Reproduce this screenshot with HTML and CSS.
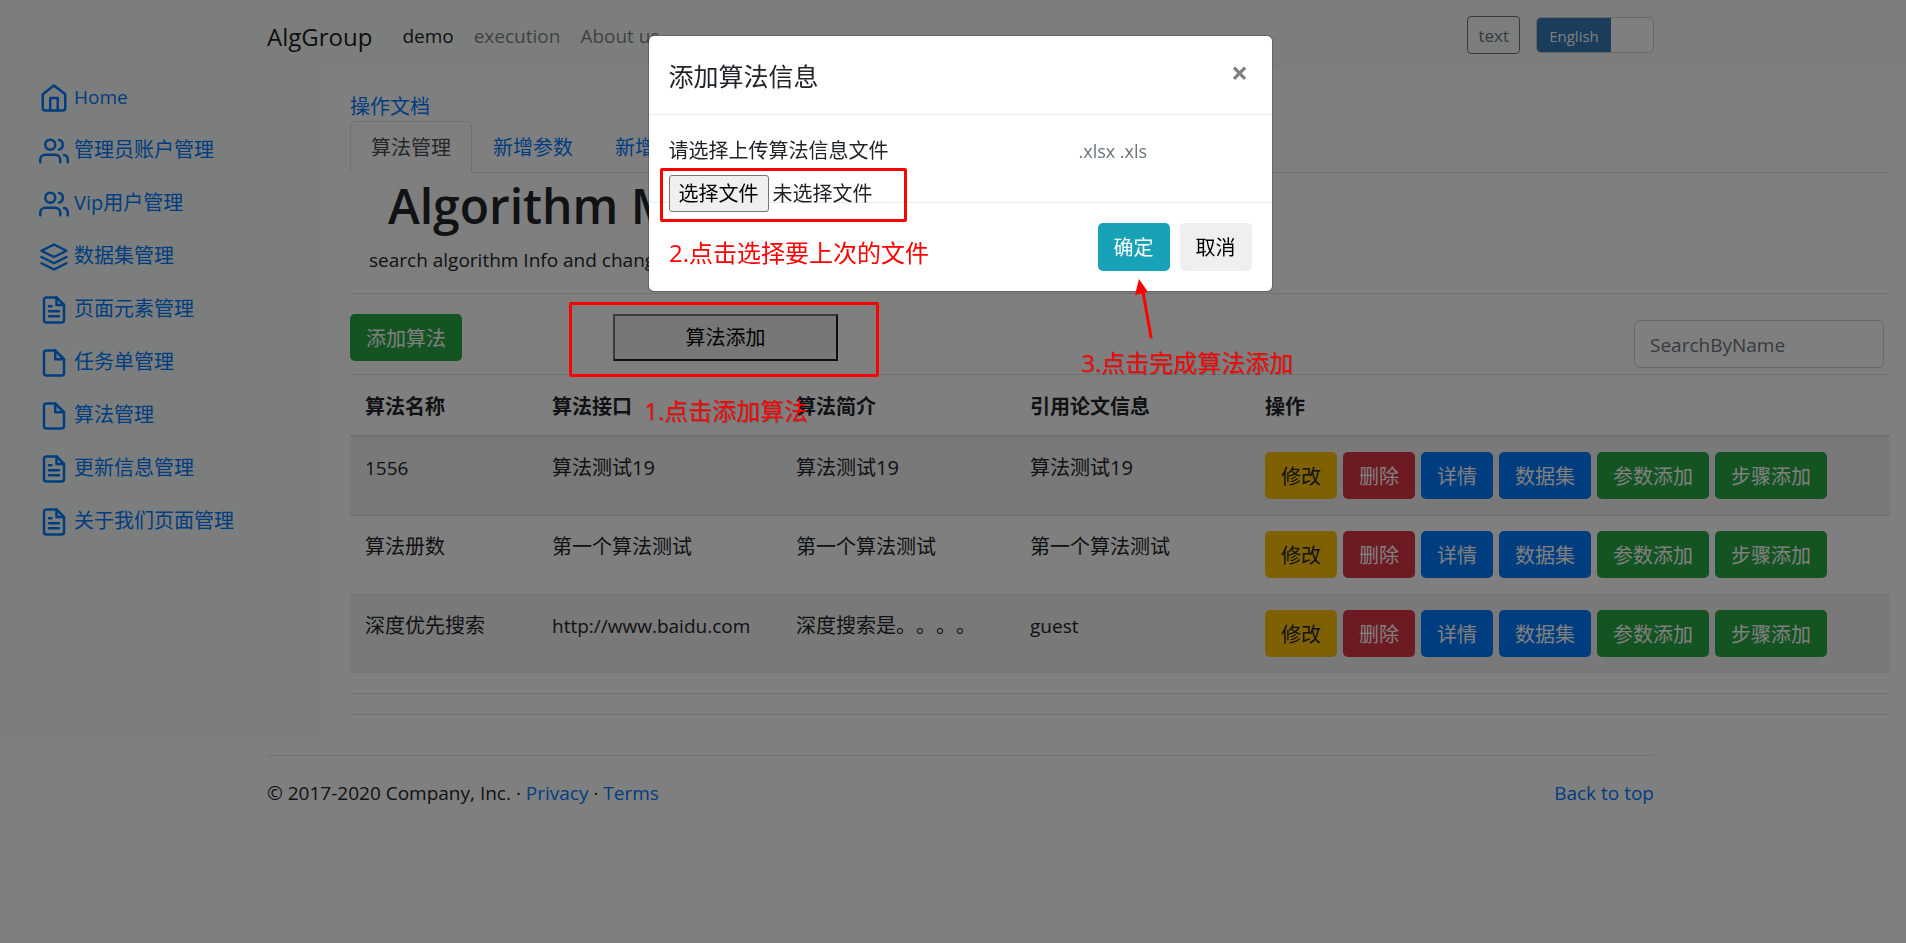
FILE: index.html
```html
<!DOCTYPE html>
<html lang="zh-CN">
<head>
<meta charset="utf-8">
<meta name="viewport" content="width=device-width, initial-scale=1">
<title>AlgGroup</title>
<link rel="stylesheet" href="styles.css">
</head>
<body>
<svg class="sprite" aria-hidden="true">
  <symbol id="i-home" viewBox="0 0 24 24"><path d="M3 9l9-7 9 7v11a2 2 0 0 1-2 2H5a2 2 0 0 1-2-2z"/><path d="M9 22V12h6v10"/></symbol>
  <symbol id="i-users" viewBox="0 0 24 24"><path d="M17 21v-2a4 4 0 0 0-4-4H5a4 4 0 0 0-4 4v2"/><circle cx="9" cy="7" r="4"/><path d="M23 21v-2a4 4 0 0 0-3-3.87"/><path d="M16 3.13a4 4 0 0 1 0 7.75"/></symbol>
  <symbol id="i-layers" viewBox="0 0 24 24"><path d="M12 2L2 7l10 5 10-5-10-5z"/><path d="M2 17l10 5 10-5"/><path d="M2 12l10 5 10-5"/></symbol>
  <symbol id="i-doc" viewBox="0 0 24 24"><path d="M14 2H6a2 2 0 0 0-2 2v16a2 2 0 0 0 2 2h12a2 2 0 0 0 2-2V8z"/><path d="M14 2v6h6M16 13H8M16 17H8M10 9H8"/></symbol>
  <symbol id="i-file" viewBox="0 0 24 24"><path d="M13 2H6a2 2 0 0 0-2 2v16a2 2 0 0 0 2 2h12a2 2 0 0 0 2-2V9z"/><path d="M13 2v7h7"/></symbol>
</svg>

<header class="navbar">
  <div class="container navbar-inner">
    <a class="brand" href="#">AlgGroup</a>
    <nav class="nav-links">
      <a class="active" href="#">demo</a>
      <a href="#">execution</a>
      <a href="#">About us</a>
    </nav>
    <button class="btn-text" type="button">text</button>
    <button class="lang-switch" type="button"><span class="lang-on">English</span></button>
  </div>
</header>

<div class="layout">
  <nav class="sidebar">
    <a class="latin" href="#"><svg class="icon"><use href="#i-home"/></svg>Home</a>
    <a href="#"><svg class="icon"><use href="#i-users"/></svg>管理员账户管理</a>
    <a href="#"><svg class="icon"><use href="#i-users"/></svg>Vip用户管理</a>
    <a href="#"><svg class="icon"><use href="#i-layers"/></svg>数据集管理</a>
    <a href="#"><svg class="icon"><use href="#i-doc"/></svg>页面元素管理</a>
    <a href="#"><svg class="icon"><use href="#i-file"/></svg>任务单管理</a>
    <a href="#"><svg class="icon"><use href="#i-file"/></svg>算法管理</a>
    <a href="#"><svg class="icon"><use href="#i-doc"/></svg>更新信息管理</a>
    <a href="#"><svg class="icon"><use href="#i-doc"/></svg>关于我们页面管理</a>
  </nav>

  <main class="main">
    <a class="doc-link" href="#">操作文档</a>
    <nav class="tabs">
      <a class="active" href="#">算法管理</a>
      <a href="#">新增参数</a>
      <a href="#">新增步骤</a>
    </nav>
    <div class="intro">
      <h1>Algorithm Manage</h1>
      <p class="latin">search algorithm Info and change</p>
    </div>
    <div class="toolbar">
      <button class="btn btn-success" type="button">添加算法</button>
      <button class="btn-add" type="button">算法添加</button>
      <input class="search latin" type="text" placeholder="SearchByName" aria-label="SearchByName">
    </div>
    <table class="table">
      <colgroup><col class="c-name"><col class="c-api"><col class="c-intro"><col class="c-ref"><col></colgroup>
      <thead>
        <tr><th>算法名称</th><th>算法接口</th><th>算法简介</th><th>引用论文信息</th><th>操作</th></tr>
      </thead>
      <tbody>
        <tr>
          <td class="latin">1556</td><td>算法测试19</td><td>算法测试19</td><td>算法测试19</td>
          <td class="ops"><div class="actions">
            <button class="btn btn-warning" type="button">修改</button>
            <button class="btn btn-danger" type="button">删除</button>
            <button class="btn btn-primary" type="button">详情</button>
            <button class="btn btn-primary" type="button">数据集</button>
            <button class="btn btn-success" type="button">参数添加</button>
            <button class="btn btn-success" type="button">步骤添加</button>
          </div></td>
        </tr>
        <tr>
          <td>算法册数</td><td>第一个算法测试</td><td>第一个算法测试</td><td>第一个算法测试</td>
          <td class="ops"><div class="actions">
            <button class="btn btn-warning" type="button">修改</button>
            <button class="btn btn-danger" type="button">删除</button>
            <button class="btn btn-primary" type="button">详情</button>
            <button class="btn btn-primary" type="button">数据集</button>
            <button class="btn btn-success" type="button">参数添加</button>
            <button class="btn btn-success" type="button">步骤添加</button>
          </div></td>
        </tr>
        <tr>
          <td>深度优先搜索</td><td class="latin">http://www.baidu.com</td><td>深度搜索是。。。。</td><td class="latin">guest</td>
          <td class="ops"><div class="actions">
            <button class="btn btn-warning" type="button">修改</button>
            <button class="btn btn-danger" type="button">删除</button>
            <button class="btn btn-primary" type="button">详情</button>
            <button class="btn btn-primary" type="button">数据集</button>
            <button class="btn btn-success" type="button">参数添加</button>
            <button class="btn btn-success" type="button">步骤添加</button>
          </div></td>
        </tr>
      </tbody>
    </table>
    <hr>
    <hr>
  </main>
</div>

<footer class="footer">
  <div class="container">
    <hr>
    <div class="footer-row latin">
      <p>© 2017-2020 Company, Inc. · <a href="#">Privacy</a> · <a href="#">Terms</a></p>
      <a href="#">Back to top</a>
    </div>
  </div>
</footer>

<div class="backdrop"></div>

<div class="modal-layer">
  <section class="modal" role="dialog" aria-modal="true" aria-labelledby="modal-title">
    <header class="modal-header">
      <h2 id="modal-title">添加算法信息</h2>
      <button class="close" type="button" aria-label="Close">×</button>
    </header>
    <div class="modal-body">
      <div class="modal-row">
        <label for="upload">请选择上传算法信息文件</label>
        <span class="hint">.xlsx .xls</span>
      </div>
      <label class="file">
        <input id="upload" type="file" accept=".xlsx,.xls">
        <span class="file-btn">选择文件</span>
        <span>未选择文件</span>
      </label>
    </div>
    <footer class="modal-footer">
      <button class="btn btn-info" type="button">确定</button>
      <button class="btn btn-light" type="button">取消</button>
    </footer>
  </section>
</div>

<div class="frame frame-add"></div>
<div class="frame frame-file"></div>
<p class="note note-1">1.点击添加算法</p>
<p class="note note-2">2.点击选择要上次的文件</p>
<p class="note note-3">3.点击完成算法添加</p>
<svg class="arrow" viewBox="0 0 24 64" aria-hidden="true"><path class="arrow-line" d="M9 13L17 58"/><path class="arrow-head" d="M5 0L14 13L1 16Z"/></svg>
</body>
</html>
```
FILE: styles.css
```css
*, *::before, *::after { box-sizing: border-box; }

body {
  margin: 0;
  background: #fff;
  color: #212529;
  font: 400 20px/30px "Open Sans", "Noto Sans CJK SC", sans-serif;
  text-spacing-trim: space-all;
  overflow-x: hidden;
}

button, input { font: inherit; color: inherit; margin: 0; }
a { color: #007bff; text-decoration: none; }
p, h1, h2 { margin: 0; }
hr { width: 100%; height: 1px; margin: 20px 0; border: 0; background: rgba(0, 0, 0, .1); }

.latin { font-size: 19px; }
.sprite { display: none; }

.container { max-width: 1387px; margin: 0 auto; }

/* Top bar */
.navbar { background: #f7fcfa; padding-left: 15px; }
.navbar-inner { display: flex; align-items: center; height: 70px; }
.brand { color: rgba(0, 0, 0, .9); font-size: 24px; margin-right: 30px; padding-top: 4px; }
.nav-links { display: flex; gap: 20px; font-size: 19px; margin-right: auto; padding-top: 2px; }
.nav-links a { color: rgba(0, 0, 0, .5); }
.nav-links .active { color: rgba(0, 0, 0, .9); }
.btn-text {
  height: 38px; padding: 2px 10px 0; margin-right: 16px;
  border: 1px solid #6c757d; border-radius: 4px; background: none;
  color: #6c757d; font-size: 17px;
}
.lang-switch {
  display: flex; width: 118px; height: 36px; padding: 0;
  border: 1px solid #ccc; border-radius: 5px; background: #fff; overflow: hidden;
}
.lang-on {
  flex: 0 0 74px; height: 34px; line-height: 36px;
  background: #337ab7; color: #fff; font-size: 15px; text-align: center;
}

/* Page columns */
.layout { display: flex; }
.sidebar { flex: 0 0 320px; padding-left: 39px; background: #f7fcfa; }
.sidebar a { display: flex; align-items: center; gap: 5px; height: 53px; }
.icon {
  width: 30px; height: 30px; margin-top: 2px;
  fill: none; stroke: #007bff; stroke-width: 2; stroke-linecap: round; stroke-linejoin: round;
}
.main { flex: 1; min-width: 0; padding: 22px 16px 0 30px; }
.doc-link { display: block; height: 29px; }

.tabs { display: flex; border-bottom: 1px solid #dee2e6; }
.tabs a {
  padding: 11px 20px 9px; margin-bottom: -1px;
  border: 1px solid transparent; border-radius: 5px 5px 0 0; white-space: nowrap;
}
.tabs .active { color: #495057; background: #fff; border-color: #dee2e6 #dee2e6 #fff; }

.intro { padding: 0 19px 18px; border-bottom: 1px solid rgba(0, 0, 0, .1); }
.intro h1 { padding: 2px 19px 8px; font-size: 48px; font-weight: 600; line-height: 62px; }

.toolbar { display: flex; align-items: flex-start; padding: 20px 6px 6px 0; }
.btn {
  height: 47px; padding: 2px 16px 0; border: 0; border-radius: 5px;
  color: #fff; white-space: nowrap;
}
.btn-success { background: #28a745; }
.btn-warning { background: #ffc107; color: #212529; }
.btn-danger { background: #dc3545; }
.btn-primary { background: #007bff; }
.btn-info { background: #17a2b8; }
.btn-light { background: #efefef; color: #000; }
.btn-add {
  width: 225px; height: 47px; margin-left: 151px; padding-top: 2px;
  border: 2px outset #767676; border-radius: 0; background: #efefef; color: #000;
}
.search {
  width: 250px; height: 48px; margin: 6px 0 0 auto; padding: 2px 15px 0;
  border: 1px solid #ced4da; border-radius: 5px; background: #fff;
}
.search::placeholder { color: #6c757d; opacity: 1; }

.table { width: 100%; table-layout: fixed; border-collapse: separate; border-spacing: 0; }
.c-name { width: 187px; }
.c-api { width: 244px; }
.c-intro { width: 234px; }
.c-ref { width: 235px; }
.table th, .table td { padding: 16px 15px; border-top: 1px solid #dee2e6; text-align: left; vertical-align: top; }
.table th { padding: 17px 15px 13px; border-bottom: 2px solid #dee2e6; font-weight: 700; }
.table .ops { padding-top: 15px; }
.table tbody tr:first-child td { border-top: 0; }
.table tbody tr:nth-child(odd) { background: rgba(0, 0, 0, .05); }
.actions { display: flex; gap: 6px; }

.footer { padding-left: 15px; }
.footer-row { display: flex; justify-content: space-between; padding-top: 2px; }

/* Dialog */
.backdrop { position: fixed; inset: 0; background: rgba(0, 0, 0, .5); }
.modal-layer { position: fixed; inset: 0; padding: 35px 0 0 14px; }
.modal {
  max-width: 625px; margin: 0 auto; background: #fff; background-clip: padding-box;
  border: 1px solid rgba(0, 0, 0, .2); border-radius: 6px;
}
.modal-header {
  display: flex; align-items: flex-start; justify-content: space-between;
  padding: 21px 20px 19px; border-bottom: 1px solid #e9ecef;
}
.modal-header h2 { font-size: 25px; font-weight: 400; line-height: 38px; }
.close {
  width: 24px; height: 32px; padding: 0; border: 0; background: none;
  color: #808080; font-size: 30px; font-weight: 700; line-height: 32px;
}
.modal-body { padding: 21px 20px 20px; border-bottom: 1px solid #e9ecef; }
.modal-row { display: grid; grid-template-columns: 410px 1fr; }
.hint { color: #6c757d; font-size: 18px; }
.file { display: flex; align-items: center; gap: 4px; width: max-content; margin: 9px 0 -30px; }
.file input { position: absolute; width: 1px; height: 1px; opacity: 0; }
.file-btn {
  height: 37px; padding: 0 9px; line-height: 36px;
  border: 1px solid #767676; border-radius: 3px; background: #efefef; color: #000;
}
.modal-footer { display: flex; justify-content: flex-end; gap: 10px; padding: 20px; }
.modal-footer .btn { height: 48px; }

/* Step marks over the page */
.frame { position: absolute; border: 3px solid #f00; border-radius: 2px; }
.frame-add { left: 569px; top: 302px; width: 310px; height: 75px; }
.frame-file { left: 660px; top: 168px; width: 247px; height: 54px; }
.note { position: absolute; color: #f00; font-size: 24px; white-space: nowrap; text-shadow: 1px 1px 1px rgba(0, 0, 0, .2); }
.note-1 { left: 644px; top: 396px; }
.note-2 { left: 669px; top: 238px; text-shadow: none; }
.note-3 { left: 1081px; top: 348px; }
.arrow { position: absolute; left: 1134px; top: 279px; width: 24px; height: 64px; }
.arrow-line { fill: none; stroke: #f00; stroke-width: 3; stroke-linecap: round; }
.arrow-head { fill: #f00; }
```
